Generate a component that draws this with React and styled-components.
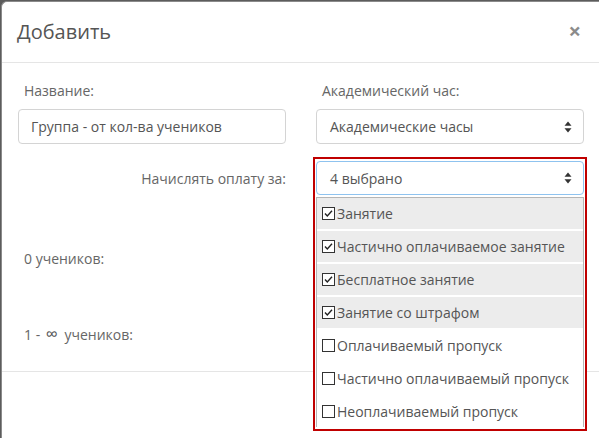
import React from 'react';
import styled, { createGlobalStyle } from 'styled-components';

const GlobalStyle = createGlobalStyle`
  html, body {
    margin: 0;
    padding: 0;
    background: #5c5c5c;
    overflow: hidden;
  }
  body {
    font-family: "Open Sans", "Noto Sans", sans-serif;
    font-size: 14px;
    color: #555;
  }
`;

const options = [
  { label: 'Занятие', checked: true },
  { label: 'Частично оплачиваемое занятие', checked: true },
  { label: 'Бесплатное занятие', checked: true },
  { label: 'Занятие со штрафом', checked: true },
  { label: 'Оплачиваемый пропуск', checked: false },
  { label: 'Частично оплачиваемый пропуск', checked: false },
  { label: 'Неоплачиваемый пропуск', checked: false },
];

const SortArrows = () => (
  <svg width="8" height="12" viewBox="0 0 8 12">
    <path d="M4 0.5 L7.5 4.8 L0.5 4.8 Z" fill="#333" />
    <path d="M4 11.5 L7.5 7.2 L0.5 7.2 Z" fill="#333" />
  </svg>
);

const CheckIcon = ({ checked }) => (
  <svg width="13" height="13" viewBox="0 0 13 13">
    <rect x="0.5" y="0.5" width="12" height="12" fill="#fff" stroke="#333" />
    {checked && (
      <path d="M3 6.5 L5.3 9 L10 3.8" fill="none" stroke="#222" strokeWidth="1.4" />
    )}
  </svg>
);

const App = () => {
  return (
    <>
      <GlobalStyle />
      <Modal>
        <Header>
          <Title>Добавить</Title>
          <Close>&times;</Close>
        </Header>
        <Body>
          <Grid>
            <Label>Название:</Label>
            <Label>Академический час:</Label>
            <Input defaultValue="Группа - от кол-ва учеников" />
            <Select>
              <span>Академические часы</span>
              <SortArrows />
            </Select>
          </Grid>

          <FormRow $top={18}>
            <Label $right>Начислять оплату за:</Label>
            <MultiSelect>
              <Frame>
                <Select $focus>
                  <span>4 выбрано</span>
                  <SortArrows />
                </Select>
                <Menu>
                  {options.map((o) => (
                    <Option key={o.label} $checked={o.checked}>
                      <CheckIcon checked={o.checked} />
                      <span>{o.label}</span>
                    </Option>
                  ))}
                </Menu>
              </Frame>
            </MultiSelect>
          </FormRow>

          <FormRow $top={46}>
            <Label>0 учеников:</Label>
            <Cell />
          </FormRow>

          <FormRow $top={41}>
            <Label>
              1 - <Infinity>∞</Infinity> учеников:
            </Label>
            <Cell />
          </FormRow>
        </Body>
      </Modal>
    </>
  );
};

export default App;

const Modal = styled.div`
  margin: 1px 0 0 1px;
  width: 598px;
  height: 437px;
  background: #fff;
  border-radius: 6px 0 0 0;
  border-top: 1px solid #8a8a8a;
  border-left: 1px solid #8a8a8a;
  box-sizing: border-box;
`;

const Header = styled.div`
  display: flex;
  align-items: center;
  padding: 16px 15px;
  box-sizing: border-box;
  border-bottom: 1px solid #e5e5e5;
`;

const Title = styled.h4`
  flex: 1;
  margin: 0;
  font-size: 20px;
  line-height: 28px;
  font-weight: 400;
  color: #555;
`;

const Close = styled.span`
  font-size: 22px;
  font-weight: 700;
  line-height: 20px;
  color: #000;
  opacity: 0.45;
  margin-top: -4px;
  margin-right: 3px;
`;

const Body = styled.div`
  padding: 18px 14px 20px;
  box-sizing: border-box;
  border-bottom: 1px solid #e5e5e5;
`;

const Grid = styled.div`
  display: grid;
  grid-template-columns: 268px 268px;
  column-gap: 30px;
  row-gap: 8px;
  padding-left: 2px;
`;

const FormRow = styled.div`
  display: grid;
  grid-template-columns: 268px 268px;
  column-gap: 30px;
  align-items: center;
  margin-top: ${({ $top }) => $top}px;
  padding-left: 2px;
  height: 34px;
`;

const Label = styled.div`
  line-height: 20px;
  color: #666;
  padding-left: ${({ $right }) => ($right ? '0' : '6px')};
  text-align: ${({ $right }) => ($right ? 'right' : 'left')};
  white-space: nowrap;
`;

const Infinity = styled.span`
  font-size: 17px;
  margin: 0 3px 0 2px;
  color: #555;
`;

const Input = styled.input`
  height: 35px;
  box-sizing: border-box;
  border: 1px solid #d4d4d4;
  border-radius: 4px;
  padding: 0 12px;
  font-family: inherit;
  font-size: 14px;
  color: #555;
  outline: none;
`;

const Select = styled.div`
  display: flex;
  align-items: center;
  justify-content: space-between;
  height: ${({ $focus }) => ($focus ? '34px' : '35px')};
  box-sizing: border-box;
  padding: 0 11px 0 13px;
  border: 1px solid ${({ $focus }) => ($focus ? '#8fc3ef' : '#d4d4d4')};
  border-radius: 4px;
  background: #fff;
  color: #555;
`;

const MultiSelect = styled.div`
  position: relative;
  height: 34px;
`;

const Frame = styled.div`
  position: absolute;
  top: -5px;
  left: -3px;
  width: 274px;
  box-sizing: border-box;
  border: 2px solid #c00000;
  padding: 2px 1px 0 1px;
  background: #fff;
  z-index: 2;
`;

const Menu = styled.div`
  margin-top: 2px;
  border: 1px solid #b5b5b5;
  border-bottom: none;
  background: #fff;
`;

const Option = styled.div`
  display: flex;
  align-items: center;
  gap: 2px;
  height: 31px;
  margin-bottom: 2px;
  padding-left: 5px;
  background: ${({ $checked }) => ($checked ? '#ececec' : '#fff')};
  color: #555;
  white-space: nowrap;

  svg {
    flex-shrink: 0;
  }
`;

const Cell = styled.div``;
